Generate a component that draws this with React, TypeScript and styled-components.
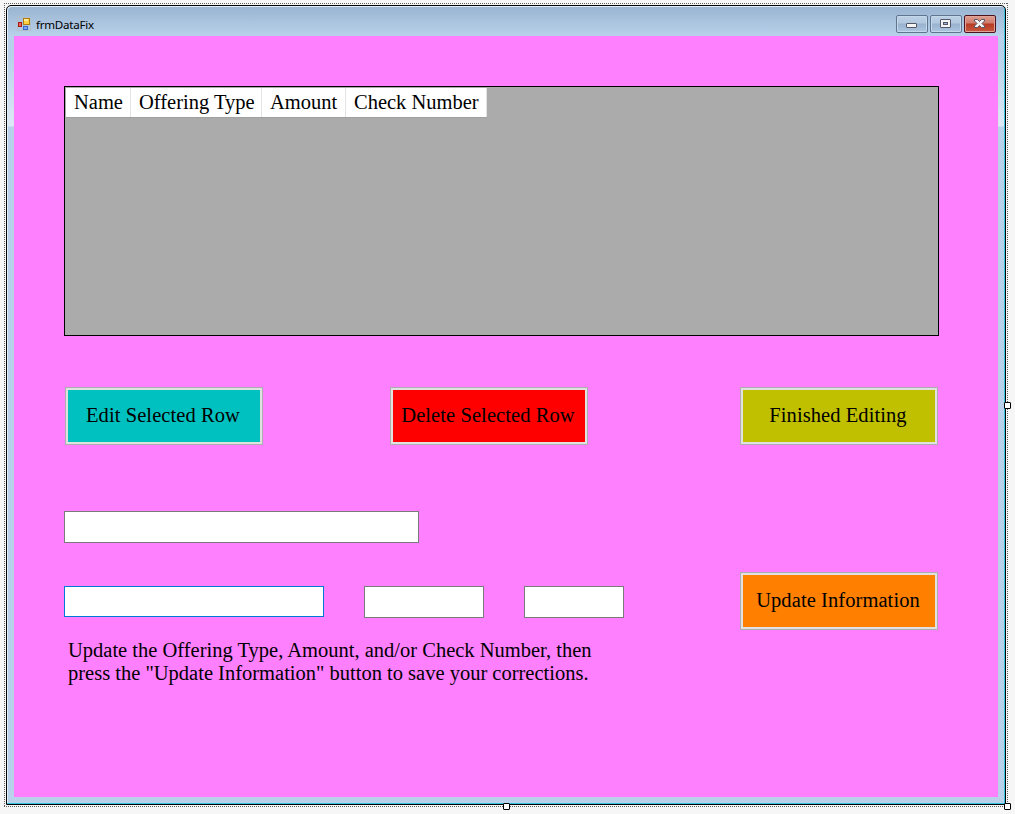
import React from 'react';
import styled, { createGlobalStyle } from 'styled-components';

const GlobalStyle = createGlobalStyle`
  * { box-sizing: border-box; }
  body { margin: 0; background: #f6f6f6; }
`;

const Surface = styled.div`
  position: relative;
  width: 1015px;
  height: 814px;
  padding: 5px 0 0 6px;
  overflow: hidden;
  background: #f6f6f6;
`;

const Selection = styled.svg`
  position: absolute;
  left: 0;
  top: 0;
  pointer-events: none;
`;

const Window = styled.div`
  display: flex;
  flex-direction: column;
  width: 1000px;
  height: 800px;
  padding: 0 7px 7px 7px;
  border: 1px solid #000;
  border-radius: 5px 5px 0 0;
  box-shadow: inset -1px -1px 0 #35c4e0, inset 1px 1px 0 #e4eef8;
  background:
    linear-gradient(180deg, #99b4d1 0, #b9d1ea 30px, #b9d1ea 50px, #dde8f5 118px, #dde8f5 120px, #b9d1ea 121px);
`;

const TitleBar = styled.header`
  display: flex;
  align-items: flex-start;
  flex: 0 0 30px;
  height: 30px;
`;

const AppIcon = styled.svg`
  margin: 11px 0 0 3px;
  flex: none;
`;

const Title = styled.span`
  flex: 1;
  margin: 10px 0 0 5px;
  font: 11.6px/17px "Noto Sans", "Open Sans", sans-serif;
  letter-spacing: -0.26px;
  color: #000;
`;

const WindowControls = styled.div`
  display: flex;
  gap: 2px;
  margin: 9px 2px 0 0;
`;

const ControlButton = styled.button<{ $close?: boolean }>`
  display: block;
  width: 32px;
  height: 18px;
  padding: 0;
  border: 1px solid ${p => (p.$close ? '#4b1320' : '#61748f')};
  border-radius: 2px;
  box-shadow: inset 0 0 0 1px ${p => (p.$close ? '#e0a398' : '#c5d8ea')};
  background: ${p =>
    p.$close
      ? 'linear-gradient(#dd9d90 0, #d07c6c 7px, #b83a22 8px, #c65a40 100%)'
      : 'linear-gradient(#bcd0e5 0, #b2c8df 7px, #98b2cf 8px, #acc5df 100%)'};
  svg { display: block; }
`;

const Client = styled.main`
  flex: 1;
  padding: 50px 59px 0 50px;
  background: #ff80ff;
  color: #000;
  font: 20.5px/23px "Liberation Serif", "Times New Roman", serif;
`;

const Grid = styled.section`
  height: 250px;
  padding: 1px;
  border: 1px solid #000;
  background: #ababab;
`;

const HeaderRow = styled.div`
  display: flex;
  height: 30px;
  width: 421px;
  border-bottom: 1px solid #a0a0a0;
  background: #fff;
`;

const HeaderCell = styled.div<{ $width: number }>`
  width: ${p => p.$width}px;
  padding: 3px 0 0 8px;
  white-space: nowrap;
  border-right: 1px solid #e3e3e3;
`;

const Actions = styled.div`
  display: flex;
  margin: 51px 0 0 1px;
`;

const ActionButton = styled.button<{ $color: string; $gap?: number }>`
  flex: none;
  width: 198px;
  height: 58px;
  margin-left: ${p => p.$gap ?? 0}px;
  padding: 0 2px 2px 0;
  border: 1px solid #adadad;
  box-shadow: inset 0 0 0 2px #e1e1e1;
  background: ${p => p.$color};
  color: #000;
  font: inherit;
  letter-spacing: 0.08px;
  white-space: nowrap;
`;

const TextBox = styled.input<{ $width: number; $active?: boolean }>`
  display: block;
  flex: none;
  width: ${p => p.$width}px;
  height: ${p => (p.$active ? 31 : 32)}px;
  padding: 3px;
  border: 1px solid ${p => (p.$active ? '#0078d7' : '#7a7a7a')};
  border-radius: 0;
  outline: none;
  background: #fff;
  font: inherit;
`;

const NameRow = styled.div`
  margin-top: 66px;
`;

const EditRow = styled.div`
  display: flex;
  align-items: flex-start;
  margin-top: 29px;
`;

const Fields = styled.div`
  flex: none;
  width: 676px;
  padding-top: 14px;
`;

const FieldLine = styled.div`
  display: flex;
  gap: 40px;
`;

const Hint = styled.p`
  width: 560px;
  margin: 21px 0 0 4px;
`;

function Handle({ x, y }: { x: number; y: number }) {
  return <rect x={x + 0.5} y={y + 0.5} width="6" height="6" rx="0.5" fill="#fff" stroke="#000" />;
}

export default function App() {
  return (
    <>
      <GlobalStyle />
      <Surface>
        <Window>
          <TitleBar>
            <AppIcon width="14" height="14" viewBox="0 0 14 14" shapeRendering="crispEdges">
              <rect x="0.5" y="0.5" width="13" height="13" fill="none" stroke="#b4bfca" />
              <rect x="1" y="5" width="4" height="5" fill="#a81c18" />
              <rect x="2" y="6" width="2" height="3" fill="#e8645a" />
              <rect x="6" y="1" width="7" height="7" fill="#b07c10" />
              <rect x="7" y="2" width="5" height="5" fill="#ffd040" />
              <rect x="7" y="2" width="4" height="2" fill="#ffe99a" />
              <rect x="6" y="9" width="5" height="4" fill="#3a68c8" />
              <rect x="7" y="10" width="3" height="2" fill="#7ca8f4" />
            </AppIcon>
            <Title>frmDataFix</Title>
            <WindowControls>
              <ControlButton aria-label="Minimize">
                <svg width="30" height="16" viewBox="0 0 30 16">
                  <rect x="9.5" y="7.5" width="10" height="4" rx="0.5" fill="#f4f4f4" stroke="#535666" />
                </svg>
              </ControlButton>
              <ControlButton aria-label="Maximize">
                <svg width="30" height="16" viewBox="0 0 30 16">
                  <rect x="9.5" y="3.5" width="10" height="8" rx="0.5" fill="#f4f4f4" stroke="#535666" />
                  <rect x="12.5" y="6.5" width="4" height="2" fill="#9db5d0" stroke="#535666" />
                </svg>
              </ControlButton>
              <ControlButton $close aria-label="Close">
                <svg width="30" height="16" viewBox="0 0 30 16">
                  <path
                    d="M9.5 3.5h3l2 2 2-2h3v1.5L17 7.5l2.5 2.5v1.5h-3l-2-2-2 2h-3V10L12 7.5 9.5 5z"
                    fill="#f4f4f4"
                    stroke="#535666"
                  />
                </svg>
              </ControlButton>
            </WindowControls>
          </TitleBar>
          <Client>
            <Grid>
              <HeaderRow>
                <HeaderCell $width={65}>Name</HeaderCell>
                <HeaderCell $width={131}>Offering Type</HeaderCell>
                <HeaderCell $width={84}>Amount</HeaderCell>
                <HeaderCell $width={141}>Check Number</HeaderCell>
              </HeaderRow>
            </Grid>
            <Actions>
              <ActionButton $color="#00c0c0">Edit Selected Row</ActionButton>
              <ActionButton $color="#ff0000" $gap={127}>Delete Selected Row</ActionButton>
              <ActionButton $color="#c0c000" $gap={152}>Finished Editing</ActionButton>
            </Actions>
            <NameRow>
              <TextBox $width={355} aria-label="Name" />
            </NameRow>
            <EditRow>
              <Fields>
                <FieldLine>
                  <TextBox $width={260} $active aria-label="Offering Type" />
                  <TextBox $width={120} aria-label="Amount" />
                  <TextBox $width={100} aria-label="Check Number" />
                </FieldLine>
                <Hint>
                  Update the Offering Type, Amount, and/or Check Number, then
                  <br />
                  press the "Update Information" button to save your corrections.
                </Hint>
              </Fields>
              <ActionButton $color="#ff8000">Update Information</ActionButton>
            </EditRow>
          </Client>
        </Window>
        <Selection width="1015" height="814" viewBox="0 0 1015 814">
          <path d="M4 3.5H1008M4 806.5H1008M4.5 3V807M1007.5 3V807" stroke="#606060" strokeDasharray="1 1" fill="none" />
          <Handle x={1004} y={402} />
          <Handle x={503} y={803} />
          <Handle x={1004} y={803} />
        </Selection>
      </Surface>
    </>
  );
}
